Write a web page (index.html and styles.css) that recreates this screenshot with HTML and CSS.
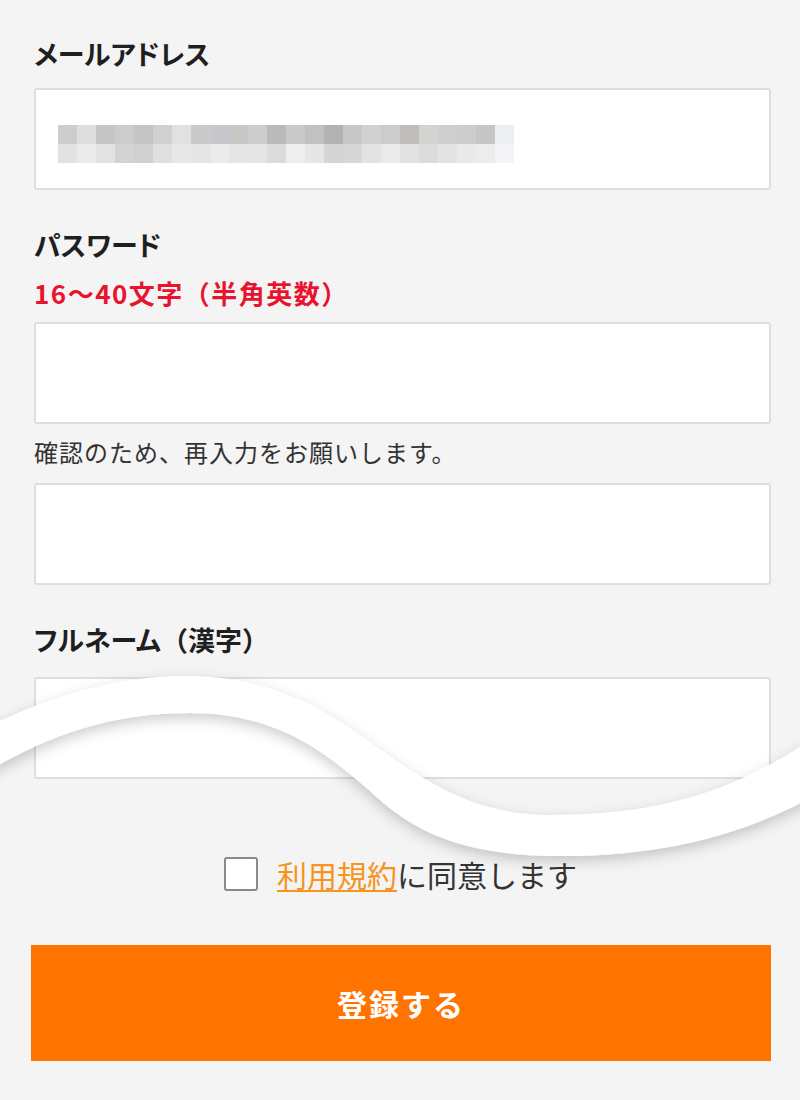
FILE: index.html
```html
<!DOCTYPE html>
<html lang="ja">
<head>
    <meta charset="UTF-8">
    <meta name="viewport" content="width=device-width, initial-scale=1.0">
    <title>会員登録</title>
    <link rel="stylesheet" href="styles.css">
</head>
<body>
    <form class="signup-form" id="signupForm">
        <div class="form-group">
            <label class="form-label" for="email">メールアドレス</label>
            <div class="input-wrap">
                <input type="email" class="form-input" id="email">
                <!-- 入力済みのアドレスはモザイクで隠す -->
                <svg class="mosaic" width="456" height="38" viewBox="0 0 456 38">
                    <g id="mosaicRows"></g>
                </svg>
            </div>
        </div>

        <div class="form-group">
            <label class="form-label" for="password">パスワード</label>
            <p class="form-note">16〜40文字（半角英数）</p>
            <input type="password" class="form-input" id="password">
            <p class="form-hint">確認のため、再入力をお願いします。</p>
            <input type="password" class="form-input" id="passwordConfirm">
        </div>

        <div class="form-group">
            <label class="form-label form-label-name" for="fullName">フルネーム<span class="paren">（漢字）</span></label>
            <input type="text" class="form-input" id="fullName">
        </div>

        <label class="agree">
            <input type="checkbox" class="agree-check">
            <span class="agree-text"><a href="#" class="terms-link">利用規約</a>に同意します</span>
        </label>

        <button type="submit" class="submit-btn">登録する</button>
    </form>

    <!-- 途中を省略した印の波線 -->
    <svg class="tear" width="800" height="220" viewBox="0 0 800 220">
        <defs>
            <filter id="tearShadow" x="-10%" y="-30%" width="120%" height="160%">
                <feDropShadow dx="0" dy="5" stdDeviation="7" flood-color="#000" flood-opacity="0.2"/>
            </filter>
        </defs>
        <path fill="#fff" filter="url(#tearShadow)"
              d="M-10,66 C50,36 120,15 190,16 C260,17 310,40 360,75
                 C420,118 470,155 550,155 C650,155 730,135 810,80
                 L810,138 C740,176 660,196 560,196 C470,196 420,175 380,140
                 C330,95 280,53 190,53 C110,53 50,75 -10,110 Z"/>
    </svg>

    <script>
        // モザイクの色（上段・下段）
        const mosaicColors = [
            ['#cdcdcd','#dedede','#c6c6c6','#cccccc','#c5c5c5','#d0d0d0','#e1e1e1','#cacaca',
             '#c6c8cd','#c7c7c7','#cdcdcc','#bababa','#cacaca','#c1c1c1','#b2b2b2','#c8c8c8',
             '#d1d1d1','#cccccc','#c2bdbd','#d2d4d2','#cfcfcf','#cccccc','#c6c6c6','#eceef2'],
            ['#e2e2e2','#eaeaea','#e3e3e3','#d3d3d3','#d0d0d0','#dfdfdf','#e8e8e8','#e5e5e5',
             '#ebebeb','#e6e6e6','#e5e5e3','#dbdbdb','#eeeeee','#e6e6e6','#d5d5d5','#d9d7d5',
             '#e3e3e3','#eaeaea','#e2e2e2','#dbdbdb','#e3e3e3','#e9e9e9','#ececec','#f4f4f6']
        ];
        const rows = document.getElementById('mosaicRows');
        mosaicColors.forEach((row, r) => {
            row.forEach((color, c) => {
                const rect = document.createElementNS('http://www.w3.org/2000/svg', 'rect');
                rect.setAttribute('x', c * 19);
                rect.setAttribute('y', r * 19);
                rect.setAttribute('width', 19);
                rect.setAttribute('height', 19);
                rect.setAttribute('fill', color);
                rows.appendChild(rect);
            });
        });

        document.getElementById('signupForm').addEventListener('submit', function(e) {
            e.preventDefault();
        });
    </script>
</body>
</html>
```

FILE: styles.css
```css
* {
    margin: 0;
    padding: 0;
    box-sizing: border-box;
    font-family: 'Noto Sans CJK JP', 'Noto Sans', sans-serif;
}

body {
    background-color: #f4f4f4;
    color: #222;
    position: relative;
    min-height: 1100px;
}

.signup-form {
    padding: 34px 29px 0 34px;
}

.form-group {
    margin-bottom: 35px;
}

.form-label {
    display: block;
    font-size: 27px;
    font-weight: bold;
    line-height: 40px;
    font-feature-settings: "palt";
    color: #1f1f1f;
    margin-bottom: 14px;
}

.form-label .paren {
    font-feature-settings: normal;
}

.form-label-name {
    margin-bottom: 17px;
}

.form-note {
    font-size: 26px;
    font-weight: bold;
    line-height: 30px;
    letter-spacing: 1.5px;
    color: #e8142f;
    margin-top: -1px;
    margin-bottom: 14px;
}

.form-hint {
    font-size: 24px;
    line-height: 30px;
    letter-spacing: 1px;
    color: #333;
    margin: 13px 0 16px;
}

.input-wrap {
    position: relative;
}

.form-input {
    display: block;
    width: 100%;
    height: 102px;
    border: 2px solid #dedede;
    border-radius: 3px;
    background: white;
    outline: none;
}

.mosaic {
    position: absolute;
    left: 24px;
    top: 37px;
}

.agree {
    display: flex;
    align-items: center;
    justify-content: center;
    gap: 19px;
    margin-top: 75px;
    margin-left: -4px;
    height: 40px;
    cursor: pointer;
}

.agree-check {
    appearance: none;
    width: 34px;
    height: 34px;
    border: 2px solid #8a8a8a;
    border-radius: 3px;
    background: white;
}

.agree-text {
    font-size: 30px;
    line-height: 40px;
    color: #333;
}

.terms-link {
    color: #f7931e;
    text-decoration: underline;
    text-underline-offset: 3px;
    text-decoration-thickness: 2px;
}

.submit-btn {
    display: block;
    width: calc(100% + 3px);
    margin: 51px 0 0 -3px;
    height: 116px;
    border: none;
    background-color: #ff7400;
    color: white;
    font-size: 30px;
    font-weight: bold;
    letter-spacing: 2px;
    cursor: pointer;
}

.tear {
    position: absolute;
    left: 0;
    top: 660px;
    pointer-events: none;
}
```
